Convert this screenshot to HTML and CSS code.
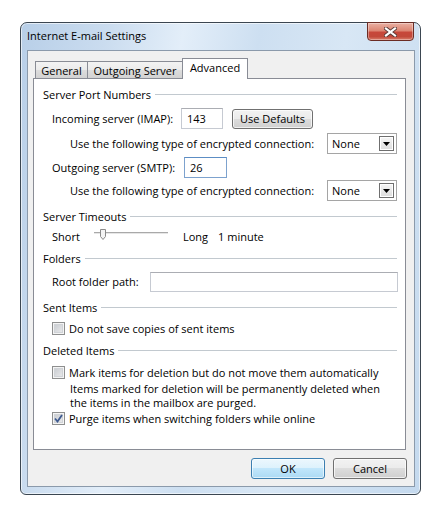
FILE: index.html
```html
<!DOCTYPE html>
<html>
<head>
<meta charset="utf-8">
<link rel="stylesheet" href="styles.css">
</head>
<body>
<div class="window">
  <div class="titlebar">
    <span class="title">Internet E-mail Settings</span>
    <div class="close">
      <svg width="13" height="10" viewBox="0 0 13 10">
        <path d="M2 1.5 L11 8.5 M11 1.5 L2 8.5" stroke="#5a3a36" stroke-width="4" stroke-linecap="square" fill="none"/>
        <path d="M2 1.5 L11 8.5 M11 1.5 L2 8.5" stroke="#ffffff" stroke-width="2.2" stroke-linecap="square" fill="none"/>
      </svg>
    </div>
  </div>
  <div class="client">
    <div class="tabs">
      <div class="tab t-general">General</div>
      <div class="tab t-outgoing">Outgoing Server</div>
      <div class="tab t-advanced active">Advanced</div>
    </div>
    <div class="pane">
      <div class="content">
        <div class="hdr">Server Port Numbers</div>
        <div class="row ind r-in">
          <span class="lbl-in">Incoming server (IMAP):</span>
          <div class="num num-in">143</div>
          <div class="btn btn-def">Use Defaults</div>
        </div>
        <div class="row ind2 r-sel1">
          <span>Use the following type of encrypted connection:</span>
          <div class="select"><span>None</span><span class="ddbtn"><svg width="7" height="4" viewBox="0 0 7 4"><path d="M0 0 H7 L3.5 4 Z" fill="#000"/></svg></span></div>
        </div>
        <div class="row ind r-out">
          <span class="lbl-out">Outgoing server (SMTP):</span>
          <div class="num num-out focus">26</div>
        </div>
        <div class="row ind2 r-sel2">
          <span>Use the following type of encrypted connection:</span>
          <div class="select"><span>None</span><span class="ddbtn"><svg width="7" height="4" viewBox="0 0 7 4"><path d="M0 0 H7 L3.5 4 Z" fill="#000"/></svg></span></div>
        </div>
        <div class="hdr h-time">Server Timeouts</div>
        <div class="srow ind r-slider">
          <span class="lbl-short">Short</span>
          <svg class="slider" width="74" height="16" viewBox="0 0 74 16">
            <rect x="0" y="4" width="74" height="1" fill="#a9a9a9"/>
            <rect x="0" y="5" width="74" height="1" fill="#e6e6e6"/>
            <path d="M6.5 1.5 H11.5 V8.5 L9 11.5 L6.5 8.5 Z" fill="#f4f4f4" stroke="#8a8a8a"/>
          </svg>
          <span class="lbl-long">Long</span>
          <span class="lbl-min">1 minute</span>
        </div>
        <div class="hdr h-fold">Folders</div>
        <div class="row ind r-root">
          <span class="lbl-root">Root folder path:</span>
          <div class="textbox"></div>
        </div>
        <div class="hdr h-sent">Sent Items</div>
        <div class="srow ind r-cb1">
          <span class="cb"></span>
          <span>Do not save copies of sent items</span>
        </div>
        <div class="hdr h-del">Deleted Items</div>
        <div class="srow ind r-cb2">
          <span class="cb"></span>
          <span>Mark items for deletion but do not move them automatically</span>
        </div>
        <div class="desc">Items marked for deletion will be permanently deleted when<br>the items in the mailbox are purged.</div>
        <div class="srow ind r-cb3">
          <span class="cb checked"><svg width="9" height="9" viewBox="0 0 9 9"><path d="M1 4.5 L3.5 7.5 L8 1" stroke="#3e5a8f" stroke-width="1.8" fill="none"/></svg></span>
          <span>Purge items when switching folders while online</span>
        </div>
      </div>
    </div>
    <div class="buttons">
      <div class="btn btn-ok">OK</div>
      <div class="btn btn-cancel">Cancel</div>
    </div>
  </div>
</div>
</body>
</html>
```

FILE: styles.css
```css
* { box-sizing: border-box; }
body {
  margin: 0;
  background: #ffffff;
  font-family: "Open Sans", sans-serif;
  font-size: 11px;
  color: #000;
}
.window {
  margin: 22px 0 0 20px;
  width: 401px;
  height: 473px;
  border: 1px solid #3b4651;
  border-radius: 7px 7px 6px 6px;
  background: linear-gradient(100deg, #b8cfe8 0%, #cadcef 18%, #e3eef9 34%, #cddff1 50%, #d8e7f5 68%, #c4d9ee 100%);
  box-shadow: inset 0 0 0 1px rgba(255,255,255,0.6);
  display: flex;
  flex-direction: column;
}
.titlebar {
  height: 27px;
  display: flex;
  align-items: flex-start;
  flex-shrink: 0;
}
.title {
  padding: 5px 0 0 6px;
  line-height: 15px;
}
.close {
  margin: -1px 6px 0 auto;
  width: 47px;
  height: 19px;
  border: 1px solid #6b2c24;
  border-radius: 0 0 4px 4px;
  background: linear-gradient(#eab0a3 0%, #dc8673 45%, #c7473a 55%, #c2493a 80%, #d97f6c 100%);
  box-shadow: inset 0 0 0 1px rgba(255,255,255,0.35);
  display: flex;
  align-items: center;
  justify-content: center;
}
.close svg { display: block; }
.client {
  flex: 1;
  margin: 0 5px 7px 6px;
  border: 1px solid #8b9aab;
  background: #f0f0f0;
  padding: 7px 8px 0 5px;
  display: flex;
  flex-direction: column;
}
.tabs {
  display: flex;
  align-items: flex-end;
  height: 20px;
  margin-left: 2px;
  position: relative;
  z-index: 1;
}
.tab {
  height: 17px;
  border: 1px solid #898c95;
  border-bottom: none;
  background: linear-gradient(#f3f3f3, #ebebeb 50%, #dddddd 50%, #d2d2d2);
  text-align: center;
  line-height: 15px;
  padding-top: 1px;
  margin-left: -1px;
}
.t-general { width: 53px; margin-left: 0; }
.t-outgoing { width: 96px; }
.t-advanced { width: 66px; }
.tab.active {
  height: 21px;
  margin-bottom: -1px;
  background: #ffffff;
  line-height: 17px;
  padding-top: 0;
}
.pane {
  width: 373px;
  height: 372px;
  border: 1px solid #898c95;
  background: #ffffff;
}
.content {
  padding: 7px 8px 0 9px;
}
.hdr {
  display: flex;
  align-items: center;
  height: 16px;
  white-space: nowrap;
}
.hdr::after {
  content: "";
  flex: 1;
  border-top: 1px solid #c2c9cf;
  margin-left: 4px;
}
.row {
  display: flex;
  align-items: center;
  height: 21px;
  white-space: nowrap;
}
.srow {
  display: flex;
  align-items: center;
  height: 16px;
  white-space: nowrap;
}
.ind { padding-left: 9px; }
.ind2 { padding-left: 27px; }
.r-in { margin-top: 6px; }
.r-sel1 { margin-top: 4px; }
.r-out { margin-top: 3px; }
.r-sel2 { margin-top: 2px; }
.h-time { margin-top: 7px; }
.r-slider { margin-top: 4px; }
.h-fold { margin-top: 6px; }
.r-root { margin-top: 5px; }
.h-sent { margin-top: 7px; }
.r-cb1 { margin-top: 5px; }
.h-del { margin-top: 6px; }
.r-cb2 { margin-top: 6px; }
.r-cb3 { margin-top: 0; }
.lbl-in { width: 129px; }
.lbl-out { width: 132px; }
.num {
  height: 21px;
  border: 1px solid #c6cad2;
  border-top-color: #abadb3;
  background: #fff;
  padding-left: 5px;
  line-height: 19px;
}
.num-in { width: 42px; }
.num-out { width: 43px; }
.num.focus { border-color: #7da2ce; border-top-color: #5c8dc4; }
.btn {
  height: 20px;
  border: 1px solid #707070;
  border-radius: 3px;
  background: linear-gradient(#f2f2f2, #ebebeb 50%, #dddddd 50%, #cfcfcf);
  box-shadow: inset 0 0 0 1px rgba(255,255,255,0.7);
  text-align: center;
  line-height: 18px;
}
.btn-def { width: 81px; margin-left: 9px; }
.select {
  margin-left: auto;
  width: 70px;
  height: 21px;
  border: 1px solid #a5a5a5;
  background: #fff;
  display: flex;
  align-items: center;
  padding-left: 4px;
}
.ddbtn {
  margin-left: auto;
  margin-right: 2px;
  width: 15px;
  height: 15px;
  border: 1px solid #6f6f6f;
  background: linear-gradient(#f6f6f6, #dcdcdc);
  box-shadow: inset 0 0 0 1px #ffffff;
  display: flex;
  align-items: center;
  justify-content: center;
}
.ddbtn svg { display: block; margin-top: 1px; }
.lbl-short { width: 42px; }
.slider { display: block; }
.lbl-long { margin-left: 15px; }
.lbl-min { margin-left: 10px; }
.lbl-root { width: 98px; }
.textbox {
  flex: 1;
  height: 20px;
  margin-right: -1px;
  border: 1px solid #c6cad2;
  border-top-color: #abadb3;
  background: #fff;
}
.cb {
  width: 13px;
  height: 13px;
  margin-right: 4px;
  border: 1px solid #8e8f8f;
  background: linear-gradient(135deg, #c4c8cd, #eeeeef);
  box-shadow: inset 0 0 0 1px #f4f4f4, inset 0 0 0 2px #d0d3d7;
  display: flex;
  align-items: center;
  justify-content: center;
}
.cb svg { display: block; }
.desc {
  margin-top: 2px;
  padding-left: 27px;
  line-height: 14px;
  white-space: nowrap;
}
.buttons {
  display: flex;
  justify-content: flex-end;
  gap: 8px;
  margin-top: 8px;
  margin-right: -1px;
}
.btn-ok, .btn-cancel { width: 74px; height: 21px; line-height: 19px; }
.btn-ok {
  border-color: #3c7fb1;
  background: linear-gradient(#ecf7fd, #dcf1fc 50%, #c1e6fb 50%, #acdaf4);
  box-shadow: inset 0 0 0 1px rgba(255,255,255,0.6);
}
```
